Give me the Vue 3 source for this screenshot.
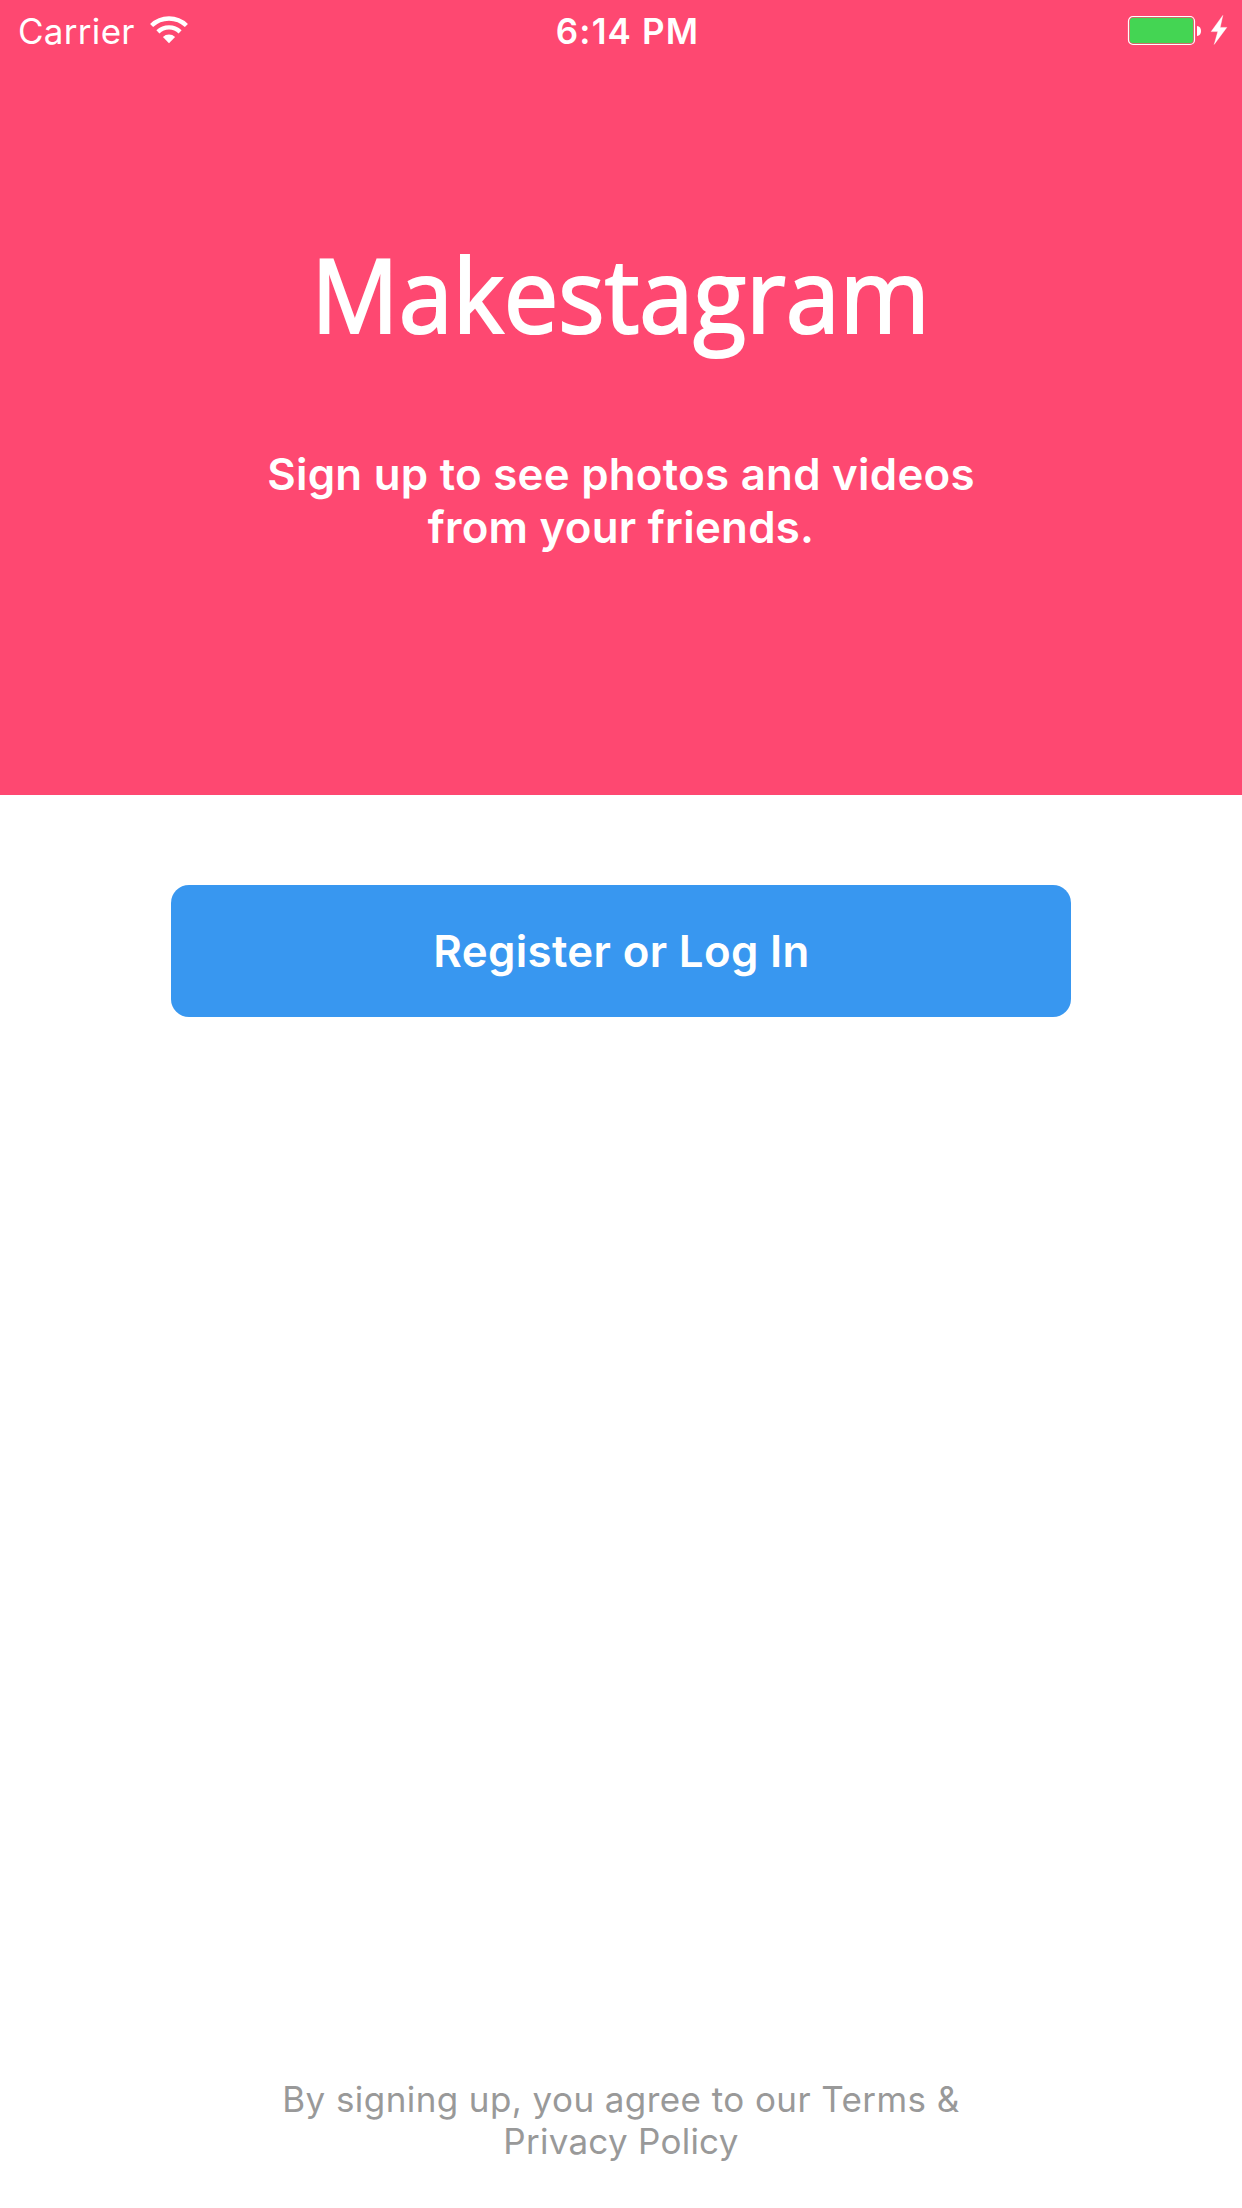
<script setup>
const tagline = ['Sign up to see photos and videos', 'from your friends.']
</script>

<template>
  <main class="screen">
    <header class="hero">
      <div class="status-bar">
        <div class="network">
          <span class="carrier">Carrier</span>
          <svg class="wifi" viewBox="0 0 38 28" width="38" height="28" aria-hidden="true">
            <g fill="none" stroke="#fff" stroke-width="4.4">
              <path d="M1.6 9.5A25 25 0 0 1 36.4 9.5" />
              <path d="M7.9 15.8A16.1 16.1 0 0 1 30.1 15.8" />
            </g>
            <path d="M12.9 21A9 9 0 0 1 25.1 21L19 27.2Z" fill="#fff" />
          </svg>
        </div>
        <span class="time">6:14 PM</span>
        <div class="power">
          <svg viewBox="0 0 101 30" width="101" height="30" aria-hidden="true">
            <rect x="0.5" y="0.5" width="66" height="28" rx="4.5" fill="none" stroke="#fff" stroke-width="1.2" />
            <rect x="1.8" y="1.8" width="63.4" height="25.4" rx="3.5" fill="#44d553" />
            <path d="M69 10C74.4 10 74.4 20 69 20Z" fill="#fff" />
            <path d="M94.8 -0.6L83.2 15.6H89.8L86.2 28.4L98.8 11.4H92.2Z" fill="#fff" stroke="#fff" stroke-width="0.4" />
          </svg>
        </div>
      </div>
      <h1 class="title">Makestagram</h1>
      <p class="tagline">
        <span v-for="line in tagline" :key="line">{{ line }}</span>
      </p>
    </header>

    <button class="login" type="button">Register or Log In</button>

    <footer class="terms">
      <span>By signing up, you agree to our Terms &amp;</span>
      <span class="policy">Privacy Policy</span>
    </footer>
  </main>
</template>

<style>
body {
  margin: 0;
}
</style>

<style scoped>
.screen {
  display: flex;
  flex-direction: column;
  align-items: center;
  box-sizing: border-box;
  width: 100%;
  height: 2208px;
  padding-bottom: 46px;
  background: #fff;
  font-family: Inter, "Liberation Sans", sans-serif;
}

.hero {
  display: flex;
  flex-direction: column;
  align-items: center;
  width: 100%;
  height: 795px;
  background: #fe4871;
  color: #fff;
}

.status-bar {
  display: grid;
  grid-template-columns: 1fr auto 1fr;
  align-items: center;
  box-sizing: border-box;
  width: 100%;
  height: 62px;
  padding: 0 13px 0 18px;
  font-size: 35px;
  line-height: 62px;
}

.network {
  display: flex;
  align-items: center;
}

.carrier {
  font-weight: 380;
  letter-spacing: 0.3px;
}

.wifi {
  margin: 0 0 3px 15px;
}

.time {
  padding-left: 8px;
  font-weight: 570;
  letter-spacing: 1.15px;
}

.power {
  display: flex;
  justify-content: flex-end;
}

.power svg {
  overflow: visible;
}

.title {
  margin: 162px 0 0;
  font-family: "Open Sans", "Noto Sans", sans-serif;
  font-size: 102px;
  font-weight: 400;
  line-height: 140px;
  transform: scaleX(0.953);
  -webkit-text-stroke: 2.2px #fff;
}

.tagline {
  display: flex;
  flex-direction: column;
  align-items: center;
  margin: 84px 0 0;
  font-size: 43.8px;
  font-weight: 570;
  line-height: 53px;
  letter-spacing: 0.27px;
}

.login {
  width: 900px;
  height: 132px;
  margin-top: 90px;
  padding: 0 0 0 1px;
  border: 0;
  border-radius: 18px;
  background: #3897f0;
  color: #fff;
  font: 570 43.8px Inter, "Liberation Sans", sans-serif;
  letter-spacing: 0.35px;
}

.terms {
  display: flex;
  flex-direction: column;
  align-items: center;
  margin-top: auto;
  color: #999;
  font-size: 35px;
  line-height: 42px;
  letter-spacing: 0.42px;
}

.policy {
  letter-spacing: 0.26px;
}
</style>
